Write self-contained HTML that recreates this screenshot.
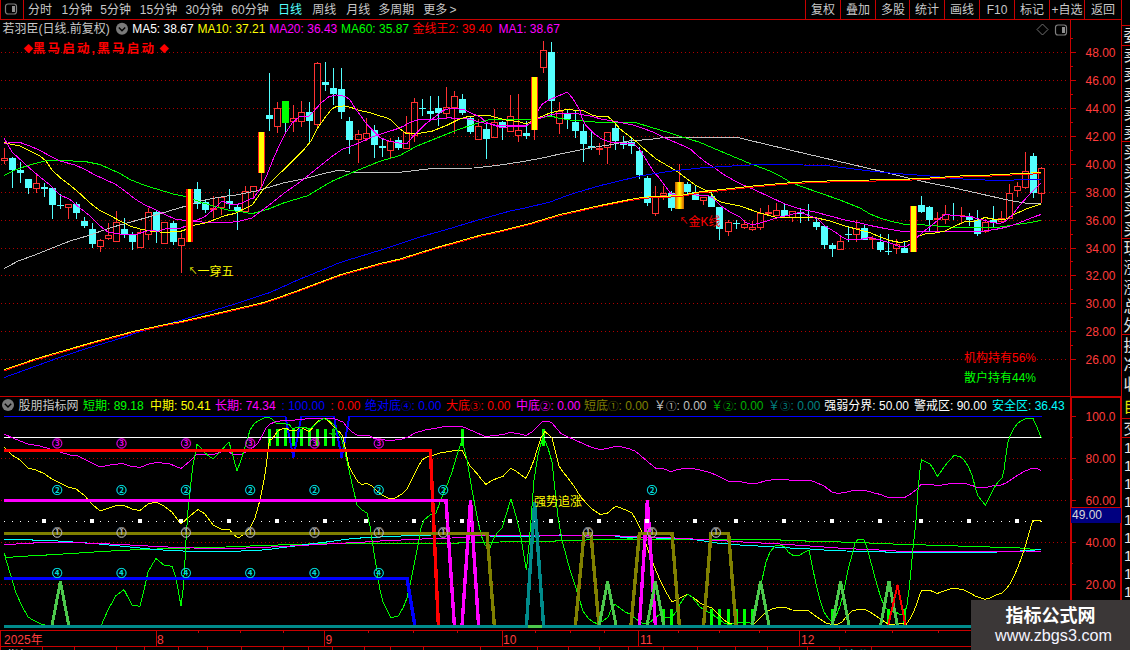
<!DOCTYPE html>
<html><head><meta charset="utf-8"><title>chart</title>
<style>html,body{margin:0;padding:0;background:#000;}body{width:1130px;height:650px;overflow:hidden;position:relative;}svg{position:absolute;left:0;top:0;display:block;font-family:'Liberation Sans','Noto Sans CJK SC',sans-serif;}.ce{shape-rendering:crispEdges}</style></head><body>
<svg width="1130" height="650" viewBox="0 0 1130 650">
<rect x="0" y="0" width="1130" height="650" fill="#000" />
<g class="ce">
<line x1="1" y1="52.5" x2="1067" y2="52.5" stroke="#b00000" stroke-width="1" stroke-dasharray="1 3"/>
<line x1="1" y1="80.5" x2="1067" y2="80.5" stroke="#b00000" stroke-width="1" stroke-dasharray="1 3"/>
<line x1="1" y1="108.5" x2="1067" y2="108.5" stroke="#b00000" stroke-width="1" stroke-dasharray="1 3"/>
<line x1="1" y1="136.5" x2="1067" y2="136.5" stroke="#b00000" stroke-width="1" stroke-dasharray="1 3"/>
<line x1="1" y1="164.5" x2="1067" y2="164.5" stroke="#b00000" stroke-width="1" stroke-dasharray="1 3"/>
<line x1="1" y1="192.5" x2="1067" y2="192.5" stroke="#b00000" stroke-width="1" stroke-dasharray="1 3"/>
<line x1="1" y1="220.5" x2="1067" y2="220.5" stroke="#b00000" stroke-width="1" stroke-dasharray="1 3"/>
<line x1="1" y1="248.5" x2="1067" y2="248.5" stroke="#b00000" stroke-width="1" stroke-dasharray="1 3"/>
<line x1="1" y1="275.5" x2="1067" y2="275.5" stroke="#b00000" stroke-width="1" stroke-dasharray="1 3"/>
<line x1="1" y1="303.5" x2="1067" y2="303.5" stroke="#b00000" stroke-width="1" stroke-dasharray="1 3"/>
<line x1="1" y1="331.5" x2="1067" y2="331.5" stroke="#b00000" stroke-width="1" stroke-dasharray="1 3"/>
<line x1="1" y1="359.5" x2="1067" y2="359.5" stroke="#b00000" stroke-width="1" stroke-dasharray="1 3"/>
<line x1="1" y1="458.5" x2="1067" y2="458.5" stroke="#b00000" stroke-width="1" stroke-dasharray="1 3"/>
<line x1="1" y1="500.5" x2="1067" y2="500.5" stroke="#b00000" stroke-width="1" stroke-dasharray="1 3"/>
<line x1="1" y1="542.5" x2="1067" y2="542.5" stroke="#b00000" stroke-width="1" stroke-dasharray="1 3"/>
<line x1="1" y1="584.5" x2="1067" y2="584.5" stroke="#b00000" stroke-width="1" stroke-dasharray="1 3"/>
</g>
<g class="ce">
<rect x="4" y="148" width="1" height="10" fill="#ff3232" />
<rect x="4" y="161" width="1" height="3" fill="#ff3232" />
<rect x="1.5" y="158.5" width="6" height="2" fill="none" stroke="#ff3232" stroke-width="1"/>
<rect x="12" y="157" width="1" height="31" fill="#54ffff" />
<rect x="9" y="158" width="7" height="12" fill="#54ffff" />
<rect x="20" y="162" width="1" height="21" fill="#54ffff" />
<rect x="17" y="170" width="7" height="3" fill="#54ffff" />
<rect x="28" y="179" width="1" height="15" fill="#54ffff" />
<rect x="25" y="179" width="7" height="9" fill="#54ffff" />
<rect x="36" y="175" width="1" height="8" fill="#ff3232" />
<rect x="36" y="189" width="1" height="4" fill="#ff3232" />
<rect x="33.5" y="183.5" width="6" height="5" fill="none" stroke="#ff3232" stroke-width="1"/>
<rect x="44" y="183" width="1" height="14" fill="#54ffff" />
<rect x="41" y="187" width="7" height="2" fill="#54ffff" />
<rect x="52" y="188" width="1" height="31" fill="#54ffff" />
<rect x="49" y="188" width="7" height="17" fill="#54ffff" />
<rect x="60" y="194" width="1" height="15" fill="#54ffff" />
<rect x="57" y="205" width="7" height="1" fill="#54ffff" />
<rect x="68" y="208" width="1" height="11" fill="#ff3232" />
<rect x="65.5" y="204.5" width="6" height="3" fill="none" stroke="#ff3232" stroke-width="1"/>
<rect x="76" y="202" width="1" height="17" fill="#54ffff" />
<rect x="73" y="204" width="7" height="9" fill="#54ffff" />
<rect x="84" y="217" width="1" height="11" fill="#54ffff" />
<rect x="81" y="221" width="7" height="5" fill="#54ffff" />
<rect x="92" y="223" width="1" height="25" fill="#54ffff" />
<rect x="89" y="229" width="7" height="15" fill="#54ffff" />
<rect x="100" y="239" width="1" height="1" fill="#ff3232" />
<rect x="100" y="247" width="1" height="5" fill="#ff3232" />
<rect x="97.5" y="240.5" width="6" height="6" fill="none" stroke="#ff3232" stroke-width="1"/>
<rect x="108" y="223" width="1" height="12" fill="#ff3232" />
<rect x="108" y="239" width="1" height="1" fill="#ff3232" />
<rect x="105.5" y="235.5" width="6" height="3" fill="none" stroke="#ff3232" stroke-width="1"/>
<rect x="116" y="211" width="1" height="11" fill="#ff3232" />
<rect x="113.5" y="222.5" width="6" height="19" fill="none" stroke="#ff3232" stroke-width="1"/>
<rect x="124" y="218" width="1" height="20" fill="#54ffff" />
<rect x="121" y="229" width="7" height="6" fill="#54ffff" />
<rect x="132" y="232" width="1" height="18" fill="#54ffff" />
<rect x="129" y="234" width="7" height="8" fill="#54ffff" />
<rect x="140" y="230" width="1" height="2" fill="#ff3232" />
<rect x="137.5" y="232.5" width="6" height="15" fill="none" stroke="#ff3232" stroke-width="1"/>
<rect x="148" y="208" width="1" height="4" fill="#ff3232" />
<rect x="148" y="235" width="1" height="5" fill="#ff3232" />
<rect x="145.5" y="212.5" width="6" height="22" fill="none" stroke="#ff3232" stroke-width="1"/>
<rect x="156" y="211" width="1" height="32" fill="#54ffff" />
<rect x="153" y="212" width="7" height="19" fill="#54ffff" />
<rect x="161.5" y="222.5" width="6" height="21" fill="none" stroke="#ff3232" stroke-width="1"/>
<rect x="173" y="221" width="1" height="24" fill="#54ffff" />
<rect x="170" y="223" width="7" height="19" fill="#54ffff" />
<rect x="181" y="233" width="1" height="5" fill="#ff3232" />
<rect x="181" y="246" width="1" height="27" fill="#ff3232" />
<rect x="178.5" y="238.5" width="6" height="7" fill="none" stroke="#ff3232" stroke-width="1"/>
<rect x="197" y="182" width="1" height="27" fill="#54ffff" />
<rect x="194" y="189" width="7" height="15" fill="#54ffff" />
<rect x="205" y="199" width="1" height="14" fill="#54ffff" />
<rect x="202" y="202" width="7" height="8" fill="#54ffff" />
<rect x="213" y="196" width="1" height="12" fill="#ff3232" />
<rect x="213" y="210" width="1" height="8" fill="#ff3232" />
<rect x="210" y="208" width="7" height="2" fill="#ff3232" />
<rect x="221" y="208" width="1" height="7" fill="#ff3232" />
<rect x="218.5" y="197.5" width="6" height="10" fill="none" stroke="#ff3232" stroke-width="1"/>
<rect x="229" y="189" width="1" height="20" fill="#54ffff" />
<rect x="226" y="201" width="7" height="3" fill="#54ffff" />
<rect x="237" y="204" width="1" height="26" fill="#54ffff" />
<rect x="234" y="207" width="7" height="4" fill="#54ffff" />
<rect x="245" y="186" width="1" height="5" fill="#ff3232" />
<rect x="242.5" y="191.5" width="6" height="20" fill="none" stroke="#ff3232" stroke-width="1"/>
<rect x="253" y="192" width="1" height="5" fill="#ff3232" />
<rect x="250.5" y="186.5" width="6" height="5" fill="none" stroke="#ff3232" stroke-width="1"/>
<rect x="269" y="73" width="1" height="58" fill="#54ffff" />
<rect x="266" y="115" width="7" height="4" fill="#54ffff" />
<rect x="277" y="102" width="1" height="6" fill="#ff3232" />
<rect x="277" y="127" width="1" height="6" fill="#ff3232" />
<rect x="274.5" y="108.5" width="6" height="18" fill="none" stroke="#ff3232" stroke-width="1"/>
<rect x="285" y="101" width="1" height="32" fill="#54ffff" />
<rect x="282" y="101" width="7" height="22" fill="#00ff00" />
<rect x="293" y="105" width="1" height="13" fill="#ff3232" />
<rect x="293" y="122" width="1" height="10" fill="#ff3232" />
<rect x="290.5" y="118.5" width="6" height="3" fill="none" stroke="#ff3232" stroke-width="1"/>
<rect x="301" y="101" width="1" height="11" fill="#ff3232" />
<rect x="301" y="122" width="1" height="5" fill="#ff3232" />
<rect x="298.5" y="112.5" width="6" height="9" fill="none" stroke="#ff3232" stroke-width="1"/>
<rect x="309" y="102" width="1" height="40" fill="#54ffff" />
<rect x="306" y="112" width="7" height="9" fill="#54ffff" />
<rect x="317" y="62" width="1" height="1" fill="#ff3232" />
<rect x="317" y="125" width="1" height="2" fill="#ff3232" />
<rect x="314.5" y="63.5" width="6" height="61" fill="none" stroke="#ff3232" stroke-width="1"/>
<rect x="325" y="62" width="1" height="29" fill="#54ffff" />
<rect x="322" y="82" width="7" height="3" fill="#54ffff" />
<rect x="333" y="68" width="1" height="37" fill="#54ffff" />
<rect x="330" y="88" width="7" height="6" fill="#54ffff" />
<rect x="341" y="68" width="1" height="51" fill="#54ffff" />
<rect x="338" y="89" width="7" height="23" fill="#54ffff" />
<rect x="349" y="117" width="1" height="37" fill="#54ffff" />
<rect x="346" y="121" width="7" height="19" fill="#54ffff" />
<rect x="358" y="130" width="1" height="4" fill="#ff3232" />
<rect x="358" y="140" width="1" height="23" fill="#ff3232" />
<rect x="355.5" y="134.5" width="6" height="5" fill="none" stroke="#ff3232" stroke-width="1"/>
<rect x="366" y="118" width="1" height="15" fill="#ff3232" />
<rect x="366" y="139" width="1" height="2" fill="#ff3232" />
<rect x="363.5" y="133.5" width="6" height="5" fill="none" stroke="#ff3232" stroke-width="1"/>
<rect x="374" y="125" width="1" height="33" fill="#54ffff" />
<rect x="371" y="130" width="7" height="15" fill="#54ffff" />
<rect x="382" y="138" width="1" height="19" fill="#54ffff" />
<rect x="379" y="146" width="7" height="2" fill="#54ffff" />
<rect x="390" y="138" width="1" height="3" fill="#ff3232" />
<rect x="390" y="151" width="1" height="8" fill="#ff3232" />
<rect x="387.5" y="141.5" width="6" height="9" fill="none" stroke="#ff3232" stroke-width="1"/>
<rect x="398" y="137" width="1" height="13" fill="#54ffff" />
<rect x="395" y="140" width="7" height="8" fill="#54ffff" />
<rect x="406" y="116" width="1" height="16" fill="#ff3232" />
<rect x="403.5" y="132.5" width="6" height="16" fill="none" stroke="#ff3232" stroke-width="1"/>
<rect x="414" y="98" width="1" height="4" fill="#ff3232" />
<rect x="414" y="136" width="1" height="6" fill="#ff3232" />
<rect x="411.5" y="102.5" width="6" height="33" fill="none" stroke="#ff3232" stroke-width="1"/>
<rect x="422" y="99" width="1" height="17" fill="#54ffff" />
<rect x="419" y="108" width="7" height="1" fill="#54ffff" />
<rect x="430" y="96" width="1" height="23" fill="#54ffff" />
<rect x="427" y="111" width="7" height="3" fill="#54ffff" />
<rect x="438" y="96" width="1" height="30" fill="#54ffff" />
<rect x="435" y="108" width="7" height="5" fill="#54ffff" />
<rect x="446" y="87" width="1" height="20" fill="#ff3232" />
<rect x="446" y="114" width="1" height="4" fill="#ff3232" />
<rect x="443.5" y="107.5" width="6" height="6" fill="none" stroke="#ff3232" stroke-width="1"/>
<rect x="454" y="91" width="1" height="5" fill="#ff3232" />
<rect x="454" y="108" width="1" height="26" fill="#ff3232" />
<rect x="451.5" y="96.5" width="6" height="11" fill="none" stroke="#ff3232" stroke-width="1"/>
<rect x="462" y="94" width="1" height="21" fill="#54ffff" />
<rect x="459" y="99" width="7" height="14" fill="#54ffff" />
<rect x="470" y="116" width="1" height="18" fill="#54ffff" />
<rect x="467" y="118" width="7" height="14" fill="#54ffff" />
<rect x="478" y="119" width="1" height="7" fill="#ff3232" />
<rect x="475.5" y="126.5" width="6" height="13" fill="none" stroke="#ff3232" stroke-width="1"/>
<rect x="486" y="122" width="1" height="37" fill="#54ffff" />
<rect x="483" y="129" width="7" height="10" fill="#54ffff" />
<rect x="494" y="109" width="1" height="13" fill="#ff3232" />
<rect x="491.5" y="122.5" width="6" height="15" fill="none" stroke="#ff3232" stroke-width="1"/>
<rect x="502" y="121" width="1" height="19" fill="#54ffff" />
<rect x="499" y="122" width="7" height="5" fill="#54ffff" />
<rect x="510" y="95" width="1" height="21" fill="#ff3232" />
<rect x="507.5" y="116.5" width="6" height="15" fill="none" stroke="#ff3232" stroke-width="1"/>
<rect x="518" y="94" width="1" height="36" fill="#ff3232" />
<rect x="518" y="136" width="1" height="6" fill="#ff3232" />
<rect x="515.5" y="130.5" width="6" height="5" fill="none" stroke="#ff3232" stroke-width="1"/>
<rect x="526" y="121" width="1" height="18" fill="#54ffff" />
<rect x="523" y="133" width="7" height="3" fill="#54ffff" />
<rect x="543" y="41" width="1" height="9" fill="#ff3232" />
<rect x="543" y="68" width="1" height="5" fill="#ff3232" />
<rect x="540.5" y="50.5" width="6" height="17" fill="none" stroke="#ff3232" stroke-width="1"/>
<rect x="551" y="42" width="1" height="75" fill="#54ffff" />
<rect x="548" y="52" width="7" height="49" fill="#54ffff" />
<rect x="559" y="102" width="1" height="9" fill="#ff3232" />
<rect x="559" y="124" width="1" height="10" fill="#ff3232" />
<rect x="556.5" y="111.5" width="6" height="12" fill="none" stroke="#ff3232" stroke-width="1"/>
<rect x="567" y="110" width="1" height="19" fill="#54ffff" />
<rect x="564" y="113" width="7" height="6" fill="#54ffff" />
<rect x="575" y="111" width="1" height="27" fill="#54ffff" />
<rect x="572" y="122" width="7" height="9" fill="#54ffff" />
<rect x="583" y="124" width="1" height="38" fill="#54ffff" />
<rect x="580" y="131" width="7" height="13" fill="#54ffff" />
<rect x="591" y="132" width="1" height="18" fill="#54ffff" />
<rect x="588" y="146" width="7" height="2" fill="#54ffff" />
<rect x="599" y="143" width="1" height="5" fill="#ff3232" />
<rect x="599" y="150" width="1" height="5" fill="#ff3232" />
<rect x="596" y="148" width="7" height="2" fill="#ff3232" />
<rect x="607" y="148" width="1" height="16" fill="#ff3232" />
<rect x="604.5" y="132.5" width="6" height="15" fill="none" stroke="#ff3232" stroke-width="1"/>
<rect x="615" y="125" width="1" height="25" fill="#54ffff" />
<rect x="612" y="128" width="7" height="13" fill="#54ffff" />
<rect x="623" y="136" width="1" height="13" fill="#54ffff" />
<rect x="620" y="142" width="7" height="3" fill="#54ffff" />
<rect x="631" y="138" width="1" height="16" fill="#54ffff" />
<rect x="628" y="142" width="7" height="4" fill="#54ffff" />
<rect x="639" y="147" width="1" height="32" fill="#54ffff" />
<rect x="636" y="151" width="7" height="24" fill="#54ffff" />
<rect x="647" y="176" width="1" height="30" fill="#54ffff" />
<rect x="644" y="178" width="7" height="25" fill="#54ffff" />
<rect x="655" y="186" width="1" height="10" fill="#ff3232" />
<rect x="655" y="214" width="1" height="2" fill="#ff3232" />
<rect x="652.5" y="196.5" width="6" height="17" fill="none" stroke="#ff3232" stroke-width="1"/>
<rect x="663" y="186" width="1" height="7" fill="#ff3232" />
<rect x="663" y="196" width="1" height="4" fill="#ff3232" />
<rect x="660.5" y="193.5" width="6" height="2" fill="none" stroke="#ff3232" stroke-width="1"/>
<rect x="671" y="191" width="1" height="20" fill="#54ffff" />
<rect x="668" y="193" width="7" height="15" fill="#54ffff" />
<rect x="679" y="164" width="1" height="18" fill="#ff3232" />
<rect x="675" y="182" width="1" height="27" fill="#d07000" />
<rect x="676" y="182" width="1" height="27" fill="#e89000" />
<rect x="677" y="182" width="1" height="27" fill="#f8b800" />
<rect x="678" y="182" width="1" height="27" fill="#ffe000" />
<rect x="679" y="182" width="1" height="27" fill="#ffff00" />
<rect x="680" y="182" width="1" height="27" fill="#ffe000" />
<rect x="681" y="182" width="1" height="27" fill="#f8b800" />
<rect x="682" y="182" width="1" height="27" fill="#e89000" />
<rect x="683" y="182" width="1" height="27" fill="#d07000" />
<rect x="687" y="182" width="1" height="14" fill="#54ffff" />
<rect x="684" y="184" width="7" height="8" fill="#54ffff" />
<rect x="695" y="185" width="1" height="15" fill="#54ffff" />
<rect x="692" y="192" width="7" height="8" fill="#54ffff" />
<rect x="703" y="201" width="1" height="4" fill="#ff3232" />
<rect x="700.5" y="197.5" width="6" height="3" fill="none" stroke="#ff3232" stroke-width="1"/>
<rect x="711" y="191" width="1" height="16" fill="#54ffff" />
<rect x="708" y="196" width="7" height="11" fill="#54ffff" />
<rect x="719" y="207" width="1" height="33" fill="#54ffff" />
<rect x="716" y="207" width="7" height="22" fill="#54ffff" />
<rect x="728" y="220" width="1" height="2" fill="#ff3232" />
<rect x="728" y="232" width="1" height="4" fill="#ff3232" />
<rect x="725.5" y="222.5" width="6" height="9" fill="none" stroke="#ff3232" stroke-width="1"/>
<rect x="736" y="220" width="1" height="9" fill="#54ffff" />
<rect x="733" y="223" width="7" height="1" fill="#54ffff" />
<rect x="744" y="220" width="1" height="4" fill="#ff3232" />
<rect x="744" y="228" width="1" height="1" fill="#ff3232" />
<rect x="741.5" y="224.5" width="6" height="3" fill="none" stroke="#ff3232" stroke-width="1"/>
<rect x="752" y="221" width="1" height="6" fill="#ff3232" />
<rect x="752" y="230" width="1" height="1" fill="#ff3232" />
<rect x="749.5" y="227.5" width="6" height="2" fill="none" stroke="#ff3232" stroke-width="1"/>
<rect x="760" y="208" width="1" height="5" fill="#ff3232" />
<rect x="760" y="228" width="1" height="2" fill="#ff3232" />
<rect x="757.5" y="213.5" width="6" height="14" fill="none" stroke="#ff3232" stroke-width="1"/>
<rect x="768" y="205" width="1" height="7" fill="#ff3232" />
<rect x="768" y="214" width="1" height="1" fill="#ff3232" />
<rect x="765" y="212" width="7" height="2" fill="#ff3232" />
<rect x="776" y="203" width="1" height="7" fill="#ff3232" />
<rect x="773.5" y="210.5" width="6" height="5" fill="none" stroke="#ff3232" stroke-width="1"/>
<rect x="784" y="204" width="1" height="12" fill="#54ffff" />
<rect x="781" y="210" width="7" height="6" fill="#54ffff" />
<rect x="792" y="218" width="1" height="4" fill="#ff3232" />
<rect x="789.5" y="211.5" width="6" height="6" fill="none" stroke="#ff3232" stroke-width="1"/>
<rect x="800" y="208" width="1" height="15" fill="#54ffff" />
<rect x="797" y="212" width="7" height="2" fill="#54ffff" />
<rect x="808" y="204" width="1" height="17" fill="#54ffff" />
<rect x="816" y="218" width="1" height="12" fill="#54ffff" />
<rect x="813" y="222" width="7" height="5" fill="#54ffff" />
<rect x="824" y="226" width="1" height="23" fill="#54ffff" />
<rect x="821" y="226" width="7" height="19" fill="#54ffff" />
<rect x="832" y="243" width="1" height="14" fill="#54ffff" />
<rect x="829" y="245" width="7" height="4" fill="#54ffff" />
<rect x="840" y="236" width="1" height="5" fill="#ff3232" />
<rect x="837.5" y="241.5" width="6" height="8" fill="none" stroke="#ff3232" stroke-width="1"/>
<rect x="848" y="227" width="1" height="15" fill="#54ffff" />
<rect x="845" y="234" width="7" height="1" fill="#54ffff" />
<rect x="856" y="220" width="1" height="8" fill="#ff3232" />
<rect x="856" y="235" width="1" height="7" fill="#ff3232" />
<rect x="853.5" y="228.5" width="6" height="6" fill="none" stroke="#ff3232" stroke-width="1"/>
<rect x="864" y="224" width="1" height="16" fill="#54ffff" />
<rect x="861" y="228" width="7" height="12" fill="#54ffff" />
<rect x="872" y="236" width="1" height="2" fill="#ff3232" />
<rect x="872" y="240" width="1" height="9" fill="#ff3232" />
<rect x="869" y="238" width="7" height="2" fill="#ff3232" />
<rect x="880" y="234" width="1" height="18" fill="#54ffff" />
<rect x="877" y="242" width="7" height="8" fill="#54ffff" />
<rect x="888" y="234" width="1" height="21" fill="#54ffff" />
<rect x="885" y="251" width="7" height="1" fill="#54ffff" />
<rect x="896" y="239" width="1" height="5" fill="#ff3232" />
<rect x="896" y="249" width="1" height="5" fill="#ff3232" />
<rect x="893.5" y="244.5" width="6" height="4" fill="none" stroke="#ff3232" stroke-width="1"/>
<rect x="904" y="241" width="1" height="12" fill="#54ffff" />
<rect x="901" y="248" width="7" height="5" fill="#54ffff" />
<rect x="921" y="196" width="1" height="17" fill="#54ffff" />
<rect x="918" y="205" width="7" height="7" fill="#54ffff" />
<rect x="929" y="206" width="1" height="26" fill="#54ffff" />
<rect x="926" y="207" width="7" height="13" fill="#54ffff" />
<rect x="937" y="212" width="1" height="6" fill="#ff3232" />
<rect x="937" y="220" width="1" height="12" fill="#ff3232" />
<rect x="934" y="218" width="7" height="2" fill="#ff3232" />
<rect x="945" y="205" width="1" height="9" fill="#ff3232" />
<rect x="945" y="220" width="1" height="4" fill="#ff3232" />
<rect x="942.5" y="214.5" width="6" height="5" fill="none" stroke="#ff3232" stroke-width="1"/>
<rect x="953" y="203" width="1" height="17" fill="#54ffff" />
<rect x="950" y="215" width="7" height="1" fill="#54ffff" />
<rect x="961" y="207" width="1" height="8" fill="#ff3232" />
<rect x="961" y="216" width="1" height="8" fill="#ff3232" />
<rect x="958" y="215" width="7" height="1" fill="#ff3232" />
<rect x="969" y="213" width="1" height="13" fill="#54ffff" />
<rect x="966" y="216" width="7" height="4" fill="#54ffff" />
<rect x="977" y="210" width="1" height="26" fill="#54ffff" />
<rect x="974" y="220" width="7" height="14" fill="#54ffff" />
<rect x="985" y="219" width="1" height="3" fill="#ff3232" />
<rect x="985" y="232" width="1" height="1" fill="#ff3232" />
<rect x="982.5" y="222.5" width="6" height="9" fill="none" stroke="#ff3232" stroke-width="1"/>
<rect x="993" y="206" width="1" height="22" fill="#54ffff" />
<rect x="990" y="220" width="7" height="3" fill="#54ffff" />
<rect x="1001" y="211" width="1" height="7" fill="#ff3232" />
<rect x="998.5" y="218.5" width="6" height="3" fill="none" stroke="#ff3232" stroke-width="1"/>
<rect x="1009" y="184" width="1" height="9" fill="#ff3232" />
<rect x="1006.5" y="193.5" width="6" height="25" fill="none" stroke="#ff3232" stroke-width="1"/>
<rect x="1017" y="182" width="1" height="4" fill="#ff3232" />
<rect x="1017" y="191" width="1" height="6" fill="#ff3232" />
<rect x="1014.5" y="186.5" width="6" height="4" fill="none" stroke="#ff3232" stroke-width="1"/>
<rect x="1025" y="152" width="1" height="19" fill="#ff3232" />
<rect x="1025" y="188" width="1" height="1" fill="#ff3232" />
<rect x="1022.5" y="171.5" width="6" height="16" fill="none" stroke="#ff3232" stroke-width="1"/>
<rect x="1033" y="153" width="1" height="45" fill="#54ffff" />
<rect x="1030" y="156" width="7" height="37" fill="#54ffff" />
<rect x="1041" y="167" width="1" height="1" fill="#ff3232" />
<rect x="1041" y="194" width="1" height="9" fill="#ff3232" />
<rect x="1038.5" y="168.5" width="6" height="25" fill="none" stroke="#ff3232" stroke-width="1"/>
</g>
<g class="ce" stroke-linejoin="round">
<polyline points="4.0,268.5 19.0,260.6 32.0,256.1 48.0,249.7 70.0,241.0 89.0,235.4 111.5,227.4 137.0,220.3 159.3,213.9 175.0,209.2 186.0,206.0 200.0,201.0 215.0,198.0 230.0,195.5 236.0,195.0 256.8,190.8 284.0,182.8 305.0,178.6 325.0,173.2 340.0,170.0 350.0,172.0 370.0,172.4 400.0,172.3 432.0,168.5 473.6,168.0 496.0,165.6 520.0,162.0 540.0,158.5 560.0,154.0 580.0,150.0 590.0,148.0 610.0,144.8 630.0,140.8 650.0,139.5 665.0,137.3 738.0,137.6 790.0,150.0 855.0,165.2 870.0,168.7 890.0,173.5 910.0,178.5 930.0,183.0 950.0,187.0 970.0,191.5 990.0,196.0 1010.0,200.5 1025.0,203.0 1041.0,204.0" fill="none" stroke="#c0c0c0" stroke-width="1" />
<polyline points="4.0,175.5 15.0,170.0 25.0,166.5 35.0,163.5 47.0,160.5 60.0,160.5 85.0,161.5 100.0,164.5 110.0,169.0 120.0,173.5 130.0,179.5 145.0,185.5 160.0,190.0 175.0,194.5 186.0,196.5 193.0,199.0 200.0,202.0 210.0,205.0 220.0,208.0 230.0,210.5 240.8,211.6 252.0,213.7 268.0,209.2 284.0,202.8 308.0,195.6 332.0,181.2 354.4,171.6 380.0,161.2 400.0,155.5 416.0,146.4 432.0,140.0 448.0,133.6 464.0,127.5 480.0,122.4 489.6,119.5 512.0,119.5 528.0,120.0 540.8,117.9 550.4,116.0 560.0,118.4 570.0,120.0 600.0,122.4 635.0,122.4 650.0,127.0 665.0,131.5 680.0,136.3 700.0,142.4 720.0,151.0 750.0,163.5 770.0,171.0 780.0,176.0 790.0,182.0 800.0,186.0 820.0,193.0 840.0,200.0 860.0,208.0 870.0,214.0 880.0,218.0 890.0,221.0 905.0,224.5 915.0,224.0 930.0,225.5 950.0,227.0 1000.0,227.0 1010.0,225.5 1020.0,224.0 1030.0,222.5 1041.0,220.5" fill="none" stroke="#00ff00" stroke-width="1" />
<polyline points="4.0,144.0 10.0,142.5 20.0,142.5 30.0,146.0 40.0,150.5 50.0,156.0 60.0,161.0 75.0,165.0 85.0,169.5 95.0,175.0 105.0,179.5 115.0,184.0 125.0,191.0 135.0,199.0 145.0,205.0 155.0,209.5 165.0,214.5 175.0,219.0 185.0,220.5 195.0,221.0 205.0,222.5 215.0,223.0 230.0,222.5 240.0,221.0 252.0,218.0 268.0,206.0 284.0,193.2 300.0,182.0 316.0,169.2 332.0,156.4 341.6,149.7 357.6,143.6 373.6,136.4 396.0,129.2 404.0,126.0 409.6,122.4 419.2,119.5 432.0,119.5 448.0,117.9 464.0,118.4 472.0,119.5 480.0,122.4 489.6,124.0 499.2,125.9 512.0,125.9 526.4,125.6 532.8,121.6 540.8,117.9 552.0,114.4 562.0,113.0 576.0,113.5 590.0,116.0 602.0,119.2 618.0,122.0 634.0,125.3 653.2,132.0 666.0,138.4 680.4,144.5 690.0,148.8 698.0,156.0 706.0,162.4 714.0,167.5 723.6,174.4 733.2,180.0 742.8,184.8 755.0,190.0 770.0,197.0 785.0,204.0 800.0,209.0 815.0,212.0 830.0,216.0 845.0,220.0 860.0,223.0 870.0,225.5 885.0,228.5 900.0,231.0 925.0,231.0 940.0,231.5 980.0,231.5 995.0,229.5 1005.0,227.5 1015.0,224.5 1025.0,220.5 1035.0,216.5 1041.0,214.5" fill="none" stroke="#ff00ff" stroke-width="1" />
<polyline points="4.0,142.5 10.0,144.0 20.0,146.0 30.0,151.0 40.0,156.0 46.0,161.0 52.0,170.0 60.0,177.5 70.0,185.0 80.0,193.7 90.0,203.0 100.0,210.5 110.0,215.5 120.0,221.0 130.0,226.0 140.0,229.0 150.0,231.0 160.0,232.0 170.0,232.0 180.0,231.5 186.0,229.5 195.0,225.0 205.0,223.0 215.0,219.5 225.0,215.5 235.0,213.5 241.6,210.0 252.0,205.2 261.6,191.6 276.0,177.2 293.6,160.0 303.2,150.4 311.2,140.8 317.6,128.0 325.6,116.8 332.0,108.8 336.8,106.4 344.8,105.9 351.2,107.5 359.2,110.4 368.8,112.3 378.4,115.5 386.4,117.6 391.2,120.0 396.0,124.8 400.8,129.6 405.6,133.1 416.0,133.9 432.0,131.2 448.0,124.8 459.2,119.2 467.2,116.8 480.0,115.2 488.0,115.2 496.0,117.6 505.6,120.0 518.4,121.6 526.4,124.0 532.8,120.8 540.8,116.8 550.4,112.8 560.0,110.4 568.0,109.6 584.0,111.0 592.0,115.0 600.0,117.0 608.0,116.5 614.0,122.0 620.0,129.0 628.0,135.0 637.2,142.4 646.8,151.2 656.4,159.2 666.0,164.8 675.6,170.4 685.2,177.6 694.8,184.8 704.4,189.6 710.8,192.8 715.6,199.2 722.0,202.4 730.0,204.0 740.0,206.0 760.0,213.0 775.0,217.0 790.0,218.0 815.0,217.5 830.0,221.0 845.0,226.0 860.0,230.0 870.0,232.5 880.0,237.0 890.0,240.5 900.0,242.5 908.0,241.0 915.0,237.5 925.0,234.0 935.0,233.0 945.0,231.0 955.0,226.0 965.0,221.5 975.0,221.0 985.0,217.5 995.0,219.5 1005.0,219.5 1015.0,214.0 1025.0,209.5 1035.0,206.0 1041.0,204.0" fill="none" stroke="#ffff00" stroke-width="1" />
<polyline points="4.0,138.0 8.0,145.0 12.0,152.0 18.0,157.5 24.0,163.0 30.0,168.5 40.0,177.0 50.0,185.0 60.0,195.0 70.0,199.5 80.0,208.0 90.0,216.0 100.0,226.0 108.0,232.0 120.0,234.0 135.0,235.0 145.0,231.5 152.0,230.0 158.0,231.5 165.0,229.0 180.0,228.5 186.0,226.0 195.0,221.0 205.0,216.5 215.0,208.0 222.0,201.0 228.0,203.5 235.0,205.0 242.0,203.0 250.0,199.0 253.6,198.0 261.6,186.8 268.0,172.4 272.8,160.0 279.2,145.6 285.6,132.8 292.0,123.2 300.0,116.0 308.8,116.5 314.4,110.4 320.8,103.2 328.8,96.8 336.8,94.9 344.8,96.3 349.6,99.2 354.4,107.2 360.8,116.0 367.2,124.8 373.6,131.2 380.0,137.6 388.0,140.8 396.0,142.4 402.4,143.7 407.2,143.2 412.0,137.6 416.0,133.6 425.6,124.0 435.2,116.8 443.2,110.4 451.2,108.0 464.0,109.6 472.0,113.6 480.0,116.8 486.4,122.4 494.4,125.6 502.4,128.0 510.4,126.4 518.4,126.9 526.4,125.9 531.2,122.4 537.6,111.2 542.4,104.0 548.8,100.0 560.0,95.2 567.2,92.0 572.8,98.4 580.0,110.4 581.2,116.0 586.0,125.6 594.0,133.6 602.0,139.2 611.6,142.4 622.8,143.2 634.0,144.0 640.4,150.4 646.8,160.8 653.2,171.2 659.6,178.4 666.0,187.2 670.8,193.6 678.8,196.0 688.4,194.4 698.0,195.2 707.6,195.2 712.4,197.6 720.4,205.6 730.0,212.0 739.6,216.8 745.0,222.0 752.0,225.0 760.0,223.0 770.0,220.0 780.0,217.0 790.0,215.0 800.0,212.0 810.0,216.0 818.0,219.0 825.0,226.0 835.0,232.0 842.0,237.0 848.0,240.0 860.0,239.5 870.0,237.5 880.0,240.0 890.0,243.0 898.0,246.0 905.0,247.0 912.0,243.0 917.0,237.5 925.0,230.5 935.0,222.5 945.0,214.5 950.0,215.0 960.0,216.0 970.0,216.0 975.0,218.0 985.0,220.5 992.0,222.5 1000.0,223.5 1005.0,221.5 1012.0,215.5 1020.0,205.0 1028.0,196.0 1035.0,189.0 1041.0,183.0" fill="none" stroke="#ff00ff" stroke-width="1" />
<polyline points="4.0,377.6 30.0,368.2 54.5,359.3 80.0,350.5 100.0,344.5 120.0,338.5 140.0,331.8 160.0,326.0 180.0,320.5 210.0,311.5 237.0,303.4 270.0,292.5 300.0,279.0 309.6,275.3 340.0,262.5 386.8,248.2 420.0,237.0 450.0,228.5 476.8,220.4 510.0,211.0 525.0,208.0 550.0,202.0 570.0,194.5 600.0,185.6 640.0,176.0 670.0,171.2 700.0,168.0 725.0,166.4 750.0,165.0 790.0,164.5 830.0,166.0 870.0,171.0 890.0,173.0 910.0,174.5 930.0,176.0 950.0,178.0 970.0,179.5 990.0,180.2 1041.0,179.8" fill="none" stroke="#0000ff" stroke-width="1" />
<polyline points="4.0,370.9 36.0,359.9 60.0,352.9 80.0,347.1 100.0,341.4 120.0,336.1 135.0,332.1 150.0,328.9 165.0,325.6 180.0,322.9 210.0,316.1 240.0,309.1 262.0,304.0 280.0,298.1 300.0,290.9 340.0,275.9 380.0,264.6 400.0,260.1 436.0,248.8 480.0,236.4 500.0,232.1 530.0,224.6 560.0,215.6 570.0,213.4 600.0,206.6 630.0,200.6 645.0,198.2 680.0,196.6 700.0,192.9 720.0,190.8 750.0,187.4 780.0,184.6 800.0,183.2 840.0,181.6 870.0,181.1 900.0,180.6 930.0,179.1 960.0,177.1 990.0,176.1 1010.0,175.1 1041.0,173.6" fill="none" stroke="#ff0000" stroke-width="1" />
<polyline points="4.0,369.8 36.0,358.8 60.0,351.8 80.0,346.0 100.0,340.3 120.0,335.0 135.0,331.0 150.0,327.8 165.0,324.5 180.0,321.8 210.0,315.0 240.0,308.0 262.0,302.9 280.0,297.0 300.0,289.8 340.0,274.8 380.0,263.5 400.0,259.0 436.0,247.7 480.0,235.3 500.0,231.0 530.0,223.5 560.0,214.5 570.0,212.3 600.0,205.5 630.0,199.5 645.0,197.1 680.0,195.5 700.0,191.8 720.0,189.7 750.0,186.3 780.0,183.5 800.0,182.1 840.0,180.5 870.0,180.0 900.0,179.5 930.0,178.0 960.0,176.0 990.0,175.0 1010.0,174.0 1041.0,172.5" fill="none" stroke="#ffff00" stroke-width="1" />
</g>
<g class="ce">
<rect x="186" y="189" width="7" height="53" fill="#ff0000" />
<rect x="188" y="189" width="3" height="53" fill="#ffff00" />
<rect x="261" y="173" width="1" height="15" fill="#ff3232" />
<rect x="258" y="132" width="7" height="41" fill="#ff2020" />
<rect x="259" y="132" width="5" height="41" fill="#ffff00" />
<rect x="534" y="130" width="1" height="10" fill="#ff3232" />
<rect x="531" y="77" width="7" height="53" fill="#ff2020" />
<rect x="532" y="77" width="5" height="53" fill="#ffff00" />
<rect x="910" y="206" width="7" height="46" fill="#ff2020" />
<rect x="911" y="206" width="5" height="46" fill="#ffff00" />
</g>
<g class="ce" stroke-linejoin="miter">
<rect x="268" y="429" width="3" height="17" fill="#00ff00" />
<rect x="276" y="429" width="3" height="17" fill="#00ff00" />
<rect x="284" y="429" width="3" height="17" fill="#00ff00" />
<rect x="292" y="429" width="3" height="17" fill="#00ff00" />
<rect x="300" y="429" width="3" height="17" fill="#00ff00" />
<rect x="308" y="429" width="3" height="17" fill="#00ff00" />
<rect x="316" y="429" width="3" height="17" fill="#00ff00" />
<rect x="324" y="429" width="3" height="17" fill="#00ff00" />
<rect x="332" y="429" width="3" height="17" fill="#00ff00" />
<rect x="461" y="429" width="3" height="17" fill="#00ff00" />
<rect x="542" y="429" width="3" height="17" fill="#00ff00" />
<rect x="662" y="609" width="3" height="16" fill="#00ff00" />
<rect x="670" y="609" width="3" height="16" fill="#00ff00" />
<rect x="710" y="609" width="3" height="16" fill="#00ff00" />
<rect x="718" y="609" width="3" height="16" fill="#00ff00" />
<rect x="727" y="609" width="3" height="16" fill="#00ff00" />
<rect x="735" y="609" width="3" height="16" fill="#00ff00" />
<rect x="743" y="609" width="3" height="16" fill="#00ff00" />
<rect x="751" y="609" width="3" height="16" fill="#00ff00" />
<rect x="831" y="609" width="3" height="16" fill="#00ff00" />
<rect x="887" y="609" width="3" height="16" fill="#00ff00" />
<rect x="903" y="609" width="3" height="16" fill="#00ff00" />
<polygon points="333.5,427.5 335.0,432.5 338.5,433.5 335.0,435 333.5,439 332.0,435 328.5,433.5 332.0,432.5" fill="#00c800"/>
<polyline points="4.0,416.5 285.4,416.5" fill="none" stroke="#0000ff" stroke-width="1" />
<polyline points="301.4,416.5 334.0,416.5" fill="none" stroke="#0000ff" stroke-width="1" />
<polyline points="349.4,416.5 1041.5,416.5" fill="none" stroke="#0000ff" stroke-width="1" />
<polyline points="285.4,416.5 293.4,458.0 301.4,416.5" fill="none" stroke="#0000ff" stroke-width="2" />
<polyline points="334.0,416.5 341.6,458.0 349.4,416.5" fill="none" stroke="#0000ff" stroke-width="2" />
<rect x="4" y="437" width="1037.5" height="1" fill="#ffffff" />
<polyline points="4.0,553.0 6.0,557.6 20.0,556.4 40.0,555.4 70.0,553.6 100.0,551.6 130.0,550.0 150.0,549.2 180.0,548.4 200.0,547.6 226.0,547.0 260.0,545.6 290.0,544.6 320.0,543.6 340.0,543.4 458.0,543.4 459.0,542.6 500.0,542.0 555.0,541.4 556.0,540.0 586.0,540.0 626.0,539.4 627.0,539.0 780.0,539.4 781.0,540.4 805.0,540.4 806.0,541.4 836.0,541.6 846.0,542.4 868.0,542.4 870.0,543.4 892.0,543.4 894.0,544.4 925.0,544.4 927.0,545.4 957.0,545.4 959.0,546.4 989.0,546.4 991.0,547.4 1020.0,548.0 1030.0,549.0 1041.0,549.4" fill="none" stroke="#00ff00" stroke-width="1" />
<polyline points="4.0,539.4 32.0,539.4 33.0,540.4 48.0,540.4 65.0,541.4 80.0,542.6 96.0,543.6 104.0,544.6 120.0,546.0 130.0,547.0 150.0,549.0 170.0,550.6 195.0,551.4 226.0,551.4 256.0,550.6 272.0,549.0 290.0,546.6 313.0,543.6 330.0,541.6 345.0,539.4 365.0,537.6 395.0,536.4 410.0,535.4 452.0,534.6 475.0,535.0 490.0,536.0 540.0,536.0 548.0,535.0 580.0,535.0 588.0,535.4 612.0,535.4 620.0,537.0 690.0,539.0 700.0,540.4 710.0,542.0 720.0,543.4 740.0,545.0 765.0,546.4 790.0,548.0 810.0,549.0 830.0,550.4 846.0,551.0 885.0,551.4 886.0,552.4 995.0,552.4 1000.0,551.6 1020.0,551.0 1022.0,550.0 1035.0,550.0 1037.0,549.0 1041.0,549.0" fill="none" stroke="#00ffff" stroke-width="1" />
<polyline points="4.0,544.6 24.0,543.6 40.0,542.6 56.0,542.2 80.0,542.8 100.0,543.6 120.0,544.4 140.0,545.6 160.0,546.6 180.0,547.6 200.0,548.2 226.0,548.6 260.0,547.6 290.0,546.0 320.0,544.4 346.0,543.0 362.0,542.2 380.0,541.0 410.0,539.6 430.0,538.6 452.0,538.0 465.0,537.4 470.0,536.0 560.0,535.0 620.0,536.0 640.0,537.0 675.0,538.0 700.0,539.4 720.0,540.6 750.0,542.4 780.0,544.0 810.0,546.0 830.0,547.4 846.0,548.6 870.0,549.6 892.0,550.6 900.0,551.4 995.0,551.4 1000.0,551.0 1025.0,551.0 1041.0,551.4" fill="none" stroke="#ff00ff" stroke-width="1" />
<polyline points="4.0,434.0 15.0,439.0 28.0,444.0 40.0,446.0 50.0,449.0 60.0,452.0 70.0,455.0 78.0,456.0 90.0,462.0 100.0,467.0 110.0,465.0 122.0,463.5 130.0,466.0 140.0,467.5 150.0,463.5 158.0,462.5 170.0,464.0 181.0,468.5 190.0,461.0 197.0,454.0 215.0,454.0 226.0,450.0 232.0,454.0 240.0,455.0 250.0,450.0 258.0,443.0 262.0,436.0 266.0,428.0 270.0,424.0 275.0,422.0 285.0,420.0 295.0,420.0 305.0,419.0 315.0,418.4 325.0,418.0 335.0,419.0 343.0,422.0 347.0,427.0 352.0,432.0 358.0,435.6 370.0,436.0 373.0,438.0 380.0,439.6 390.0,440.4 400.0,439.6 408.0,437.0 415.0,433.0 425.0,430.0 435.0,428.4 445.0,426.4 462.0,426.4 468.0,429.0 475.0,432.0 485.0,436.4 495.0,435.6 505.0,434.0 510.0,432.4 520.0,434.0 526.0,435.6 532.0,432.0 538.0,426.0 543.0,421.0 548.0,421.0 552.0,423.0 557.0,429.0 561.0,433.6 567.0,436.4 575.0,440.0 585.0,444.4 592.0,447.6 600.0,449.6 608.0,448.4 615.0,446.4 622.0,447.0 628.0,448.4 635.0,451.0 640.0,455.0 648.0,462.0 656.0,468.4 664.0,469.0 671.0,471.6 676.0,470.0 684.0,468.4 692.0,468.4 700.0,470.0 710.0,472.4 718.0,476.0 728.0,481.0 740.0,481.6 750.0,483.6 756.0,483.6 765.0,481.0 773.0,479.6 788.0,479.6 790.0,480.4 810.0,480.4 816.0,482.4 824.0,486.0 832.0,492.0 838.0,493.6 846.0,492.2 853.0,490.4 865.0,490.4 872.0,492.4 880.0,494.4 888.0,497.4 905.0,497.4 912.0,493.0 917.0,489.0 921.0,484.4 933.0,484.4 935.0,485.4 940.0,485.4 950.0,483.6 965.0,483.6 972.0,485.4 977.0,487.4 987.0,487.4 992.0,486.0 1000.0,485.4 1006.0,483.0 1012.0,479.0 1018.0,475.0 1024.0,471.6 1030.0,469.0 1034.0,468.4 1038.0,469.0 1041.0,470.4" fill="none" stroke="#ff00ff" stroke-width="1" />
<polyline points="4.0,447.0 12.0,455.0 20.0,460.0 28.0,468.0 36.0,470.0 44.0,473.5 52.0,479.0 60.0,483.0 68.0,487.0 76.0,489.0 84.0,495.0 92.0,504.0 100.0,511.0 108.0,508.5 116.0,505.5 124.0,505.5 132.0,509.0 140.0,510.5 148.0,504.0 156.0,502.0 164.0,506.0 172.0,512.0 181.0,524.0 190.0,516.0 198.0,509.5 205.0,514.0 213.0,525.0 221.0,529.0 226.0,529.6 230.0,530.0 233.0,534.0 238.0,538.0 243.0,535.0 250.0,528.0 255.0,518.0 260.0,500.0 264.0,480.0 266.2,466.0 268.0,450.0 269.5,440.0 272.0,439.0 274.0,436.5 277.0,432.0 280.0,429.5 284.0,428.3 287.5,429.0 290.0,430.5 293.0,430.0 297.0,430.0 299.0,428.0 301.0,427.5 304.0,429.0 307.0,430.5 309.0,431.5 312.0,428.5 315.0,424.0 318.0,421.0 322.0,419.5 325.0,418.3 328.0,420.5 331.0,423.5 334.0,427.0 337.0,430.0 340.0,432.5 342.0,435.0 343.5,440.0 345.0,447.0 346.5,455.0 349.0,466.0 352.0,472.0 358.0,482.0 362.0,484.4 367.0,483.6 372.0,486.0 377.0,491.0 382.0,495.0 388.0,498.0 395.0,498.0 402.0,494.0 407.0,489.0 412.0,479.0 417.0,469.0 422.0,460.0 428.0,456.4 434.0,455.0 440.0,453.0 448.0,451.6 456.0,450.4 462.0,450.0 466.0,458.0 470.0,466.0 476.0,472.4 482.0,480.0 486.0,484.4 492.0,480.4 498.0,478.0 503.0,476.4 508.0,471.0 511.0,468.4 516.0,471.0 521.0,475.0 526.0,478.4 530.0,470.0 534.0,460.0 538.0,447.0 541.0,438.0 545.0,431.6 549.0,435.0 552.0,438.0 555.0,450.0 559.0,466.0 563.0,472.0 568.0,478.0 574.0,486.0 580.0,496.0 586.0,503.0 592.0,509.0 600.0,514.4 607.0,513.6 612.0,509.0 616.0,506.4 622.0,508.4 628.0,511.0 632.0,513.0 636.0,520.0 640.0,528.0 643.0,535.0 648.0,550.0 654.0,566.0 660.0,580.0 666.0,592.0 672.0,602.0 678.0,599.0 684.0,596.0 688.0,594.4 694.0,598.0 700.0,603.0 706.0,606.0 712.0,608.0 718.0,614.0 724.0,620.0 730.0,624.0 740.0,622.0 750.0,623.0 754.0,624.0 760.0,618.0 766.0,612.0 772.0,609.0 778.0,607.6 786.0,607.6 792.0,610.0 808.0,610.4 814.0,615.0 820.0,619.0 826.0,623.0 832.0,624.4 838.0,624.0 842.0,622.0 846.0,617.0 852.0,611.0 858.0,609.4 865.0,609.4 870.0,612.0 876.0,616.0 882.0,620.0 888.0,624.0 895.0,624.0 900.0,623.0 906.0,624.4 910.0,619.0 914.0,611.0 917.0,603.0 920.0,594.0 922.0,590.4 930.0,590.4 934.0,592.0 937.0,593.6 942.0,591.6 950.0,589.0 956.0,588.4 964.0,590.0 970.0,593.0 976.0,596.4 985.0,599.4 990.0,598.0 996.0,595.0 1002.0,593.0 1006.0,589.0 1010.0,584.0 1014.0,576.0 1018.0,567.0 1022.0,556.0 1026.0,544.0 1029.0,533.0 1032.0,523.0 1033.0,520.4 1040.0,520.4 1041.0,521.4" fill="none" stroke="#ffff00" stroke-width="1" />
<polyline points="4.0,553.0 10.0,573.0 16.0,593.0 22.0,606.0 28.0,617.0 34.0,620.6 42.0,624.4 50.0,626.0 101.0,626.0 108.0,610.0 116.0,595.6 124.0,589.6 132.0,605.0 140.0,606.4 144.0,590.0 148.0,572.0 152.0,565.0 156.0,558.4 160.0,562.0 164.0,565.0 172.0,566.4 176.0,578.0 181.0,606.0 183.0,590.0 185.0,560.0 186.0,540.0 188.0,510.0 190.0,490.0 193.0,465.0 197.0,444.5 201.0,448.0 205.0,453.0 213.0,459.0 221.0,451.0 226.0,445.0 229.0,442.0 233.0,456.0 237.0,471.0 241.0,460.0 246.0,444.0 250.0,430.0 254.0,424.0 258.0,421.0 263.0,418.4 268.0,417.0 272.0,419.0 277.0,424.0 283.0,423.6 289.0,424.4 293.0,429.0 297.0,427.0 303.0,427.0 310.0,429.0 316.0,424.0 320.0,420.4 324.0,418.4 330.0,421.0 334.0,425.0 338.0,432.0 342.0,440.0 345.0,452.0 349.0,470.0 353.0,488.0 357.0,505.0 362.0,510.0 367.0,513.0 370.0,526.0 372.0,540.0 376.0,565.0 380.0,590.0 383.0,602.0 387.0,610.0 391.0,617.6 398.0,616.4 403.0,608.0 407.0,598.0 411.0,580.0 415.0,560.0 419.0,540.0 421.0,528.0 424.0,520.0 430.0,515.0 436.0,513.0 440.0,502.0 446.0,488.0 452.0,472.0 457.0,455.0 462.0,440.0 467.0,460.0 472.0,490.0 477.0,516.0 481.0,535.0 485.0,545.0 489.0,550.0 493.0,540.0 497.0,533.0 502.0,528.0 506.0,515.0 511.0,499.0 516.0,516.0 520.0,532.0 523.0,550.0 526.4,570.0 529.0,545.0 531.0,520.0 534.0,480.0 538.0,455.0 543.0,436.0 548.0,448.0 552.0,462.0 555.0,490.0 558.0,517.0 562.0,540.0 566.0,555.0 570.0,570.0 575.0,585.0 579.0,598.0 583.0,611.0 588.0,618.0 593.0,622.0 598.0,624.0 603.0,621.0 608.0,617.0 611.0,610.0 615.0,604.4 620.0,608.0 625.0,612.0 630.0,614.0 636.0,619.0 642.0,623.0 648.0,624.0 655.0,618.0 660.0,614.0 664.0,617.0 668.0,618.0 672.0,617.0 676.0,612.0 680.0,604.0 684.0,598.0 688.0,594.0 692.0,597.0 696.0,602.0 700.0,607.0 704.0,610.0 708.0,612.0 712.0,614.0 716.0,617.0 720.0,620.0 724.0,623.0 730.0,624.4 740.0,622.0 748.0,622.0 752.0,624.0 758.0,600.0 762.0,580.0 766.0,562.0 770.0,552.0 775.0,546.0 780.0,545.0 785.0,547.0 788.0,552.0 793.0,555.4 800.0,555.0 805.0,552.0 809.0,550.0 812.0,565.0 816.0,584.0 820.0,600.0 824.0,612.0 828.0,618.0 832.0,622.0 836.0,616.0 840.0,606.0 844.0,590.0 848.0,570.0 852.0,555.0 855.0,543.0 858.0,539.4 864.0,540.0 866.0,545.0 869.0,555.0 873.0,570.0 877.0,585.0 881.0,598.0 885.0,608.0 890.0,611.0 896.0,612.0 900.0,615.0 905.0,612.0 907.0,605.0 909.0,590.0 911.0,570.0 913.0,548.0 915.0,530.0 916.0,520.0 918.0,490.0 920.0,470.0 921.4,460.0 926.0,462.0 930.0,464.0 934.0,470.0 937.4,476.4 942.0,470.0 948.0,462.0 954.0,455.6 960.0,456.4 964.0,460.0 968.0,466.0 972.0,475.0 976.0,490.0 978.0,496.0 982.0,501.0 985.4,505.0 990.0,496.0 994.0,488.0 998.0,482.0 1002.0,478.0 1004.0,470.0 1006.0,455.0 1008.0,442.0 1010.0,436.0 1014.0,428.0 1018.0,423.0 1022.0,420.4 1026.0,418.4 1033.0,418.4 1036.0,425.0 1039.0,432.0 1041.4,438.4" fill="none" stroke="#00ff00" stroke-width="1" />
<polyline points="4.0,450.5 430.4,450.5 438.4,626.0" fill="none" stroke="#ff0000" stroke-width="3.4" />
<polyline points="4.0,500.5 446.0,500.5 454.4,626.0" fill="none" stroke="#ff00ff" stroke-width="3.4" />
<polyline points="462.0,626.0 470.5,500.5 478.6,626.0" fill="none" stroke="#ff00ff" stroke-width="3.4" />
<polyline points="639.4,626.0 647.4,500.5 655.4,626.0" fill="none" stroke="#ff00ff" stroke-width="3.4" />
<polyline points="4.0,533.5 487.0,533.5 494.4,626.0" fill="none" stroke="#808000" stroke-width="3.4" />
<polyline points="575.4,626.0 584.0,533.5 591.0,533.5 599.0,626.0" fill="none" stroke="#808000" stroke-width="3.4" />
<polyline points="631.0,626.0 639.4,533.5 672.0,533.5 679.4,626.0" fill="none" stroke="#808000" stroke-width="3.4" />
<polyline points="703.6,626.0 711.0,533.5 728.6,533.5 736.0,626.0" fill="none" stroke="#808000" stroke-width="3.4" />
<polyline points="4.0,578.3 407.0,578.3 415.0,626.0" fill="none" stroke="#0000ff" stroke-width="3.4" />
<polyline points="51.9,626.0 60.4,581.5 68.9,626.0" fill="none" stroke="#4cc84c" stroke-width="3" />
<polyline points="599.1,626.0 607.6,581.5 616.1,626.0" fill="none" stroke="#4cc84c" stroke-width="3" />
<polyline points="646.9,626.0 655.4,581.5 663.9,626.0" fill="none" stroke="#4cc84c" stroke-width="3" />
<polyline points="752.1,626.0 760.6,581.5 769.1,626.0" fill="none" stroke="#4cc84c" stroke-width="3" />
<polyline points="832.1,626.0 840.6,581.5 849.1,626.0" fill="none" stroke="#4cc84c" stroke-width="3" />
<polyline points="880.5,626.0 889.0,581.5 897.5,626.0" fill="none" stroke="#4cc84c" stroke-width="3" />
<polyline points="888.0,626.0 897.6,585.0 905.6,626.0" fill="none" stroke="#ff0000" stroke-width="2" />
<polyline points="526.4,626.0 534.6,502.0 543.6,626.0" fill="none" stroke="#008b8b" stroke-width="3.4" />
<rect x="4" y="625" width="1037.5" height="3" fill="#008b8b" />
<rect x="528" y="625" width="14" height="3" fill="#4cc84c" />
<rect x="4" y="521" width="1" height="1" fill="#ffffff" />
<rect x="12" y="521" width="1" height="1" fill="#ffffff" />
<rect x="20" y="521" width="1" height="1" fill="#ffffff" />
<rect x="28" y="521" width="1" height="1" fill="#ffffff" />
<rect x="36" y="521" width="1" height="1" fill="#ffffff" />
<rect x="44" y="521" width="1" height="1" fill="#ffffff" />
<rect x="52" y="521" width="1" height="1" fill="#ffffff" />
<rect x="60" y="521" width="1" height="1" fill="#ffffff" />
<rect x="68" y="521" width="1" height="1" fill="#ffffff" />
<rect x="76" y="521" width="1" height="1" fill="#ffffff" />
<rect x="84" y="521" width="1" height="1" fill="#ffffff" />
<rect x="92" y="521" width="1" height="1" fill="#ffffff" />
<rect x="100" y="521" width="1" height="1" fill="#ffffff" />
<rect x="108" y="521" width="1" height="1" fill="#ffffff" />
<rect x="116" y="521" width="1" height="1" fill="#ffffff" />
<rect x="124" y="521" width="1" height="1" fill="#ffffff" />
<rect x="132" y="521" width="1" height="1" fill="#ffffff" />
<rect x="140" y="521" width="1" height="1" fill="#ffffff" />
<rect x="148" y="521" width="1" height="1" fill="#ffffff" />
<rect x="156" y="521" width="1" height="1" fill="#ffffff" />
<rect x="164" y="521" width="1" height="1" fill="#ffffff" />
<rect x="173" y="521" width="1" height="1" fill="#ffffff" />
<rect x="181" y="521" width="1" height="1" fill="#ffffff" />
<rect x="189" y="521" width="1" height="1" fill="#ffffff" />
<rect x="197" y="521" width="1" height="1" fill="#ffffff" />
<rect x="205" y="521" width="1" height="1" fill="#ffffff" />
<rect x="213" y="521" width="1" height="1" fill="#ffffff" />
<rect x="221" y="521" width="1" height="1" fill="#ffffff" />
<rect x="229" y="521" width="1" height="1" fill="#ffffff" />
<rect x="237" y="521" width="1" height="1" fill="#ffffff" />
<rect x="245" y="521" width="1" height="1" fill="#ffffff" />
<rect x="253" y="521" width="1" height="1" fill="#ffffff" />
<rect x="261" y="521" width="1" height="1" fill="#ffffff" />
<rect x="269" y="521" width="1" height="1" fill="#ffffff" />
<rect x="277" y="521" width="1" height="1" fill="#ffffff" />
<rect x="285" y="521" width="1" height="1" fill="#ffffff" />
<rect x="293" y="521" width="1" height="1" fill="#ffffff" />
<rect x="301" y="521" width="1" height="1" fill="#ffffff" />
<rect x="309" y="521" width="1" height="1" fill="#ffffff" />
<rect x="317" y="521" width="1" height="1" fill="#ffffff" />
<rect x="325" y="521" width="1" height="1" fill="#ffffff" />
<rect x="333" y="521" width="1" height="1" fill="#ffffff" />
<rect x="341" y="521" width="1" height="1" fill="#ffffff" />
<rect x="349" y="521" width="1" height="1" fill="#ffffff" />
<rect x="358" y="521" width="1" height="1" fill="#ffffff" />
<rect x="366" y="521" width="1" height="1" fill="#ffffff" />
<rect x="374" y="521" width="1" height="1" fill="#ffffff" />
<rect x="382" y="521" width="1" height="1" fill="#ffffff" />
<rect x="390" y="521" width="1" height="1" fill="#ffffff" />
<rect x="398" y="521" width="1" height="1" fill="#ffffff" />
<rect x="406" y="521" width="1" height="1" fill="#ffffff" />
<rect x="414" y="521" width="1" height="1" fill="#ffffff" />
<rect x="422" y="521" width="1" height="1" fill="#ffffff" />
<rect x="430" y="521" width="1" height="1" fill="#ffffff" />
<rect x="438" y="521" width="1" height="1" fill="#ffffff" />
<rect x="446" y="521" width="1" height="1" fill="#ffffff" />
<rect x="454" y="521" width="1" height="1" fill="#ffffff" />
<rect x="462" y="521" width="1" height="1" fill="#ffffff" />
<rect x="470" y="521" width="1" height="1" fill="#ffffff" />
<rect x="478" y="521" width="1" height="1" fill="#ffffff" />
<rect x="486" y="521" width="1" height="1" fill="#ffffff" />
<rect x="494" y="521" width="1" height="1" fill="#ffffff" />
<rect x="502" y="521" width="1" height="1" fill="#ffffff" />
<rect x="510" y="521" width="1" height="1" fill="#ffffff" />
<rect x="518" y="521" width="1" height="1" fill="#ffffff" />
<rect x="526" y="521" width="1" height="1" fill="#ffffff" />
<rect x="534" y="521" width="1" height="1" fill="#ffffff" />
<rect x="543" y="521" width="1" height="1" fill="#ffffff" />
<rect x="551" y="521" width="1" height="1" fill="#ffffff" />
<rect x="559" y="521" width="1" height="1" fill="#ffffff" />
<rect x="567" y="521" width="1" height="1" fill="#ffffff" />
<rect x="575" y="521" width="1" height="1" fill="#ffffff" />
<rect x="583" y="521" width="1" height="1" fill="#ffffff" />
<rect x="591" y="521" width="1" height="1" fill="#ffffff" />
<rect x="599" y="521" width="1" height="1" fill="#ffffff" />
<rect x="607" y="521" width="1" height="1" fill="#ffffff" />
<rect x="615" y="521" width="1" height="1" fill="#ffffff" />
<rect x="623" y="521" width="1" height="1" fill="#ffffff" />
<rect x="631" y="521" width="1" height="1" fill="#ffffff" />
<rect x="639" y="521" width="1" height="1" fill="#ffffff" />
<rect x="647" y="521" width="1" height="1" fill="#ffffff" />
<rect x="655" y="521" width="1" height="1" fill="#ffffff" />
<rect x="663" y="521" width="1" height="1" fill="#ffffff" />
<rect x="671" y="521" width="1" height="1" fill="#ffffff" />
<rect x="679" y="521" width="1" height="1" fill="#ffffff" />
<rect x="687" y="521" width="1" height="1" fill="#ffffff" />
<rect x="695" y="521" width="1" height="1" fill="#ffffff" />
<rect x="703" y="521" width="1" height="1" fill="#ffffff" />
<rect x="711" y="521" width="1" height="1" fill="#ffffff" />
<rect x="719" y="521" width="1" height="1" fill="#ffffff" />
<rect x="728" y="521" width="1" height="1" fill="#ffffff" />
<rect x="736" y="521" width="1" height="1" fill="#ffffff" />
<rect x="744" y="521" width="1" height="1" fill="#ffffff" />
<rect x="752" y="521" width="1" height="1" fill="#ffffff" />
<rect x="760" y="521" width="1" height="1" fill="#ffffff" />
<rect x="768" y="521" width="1" height="1" fill="#ffffff" />
<rect x="776" y="521" width="1" height="1" fill="#ffffff" />
<rect x="784" y="521" width="1" height="1" fill="#ffffff" />
<rect x="792" y="521" width="1" height="1" fill="#ffffff" />
<rect x="800" y="521" width="1" height="1" fill="#ffffff" />
<rect x="808" y="521" width="1" height="1" fill="#ffffff" />
<rect x="816" y="521" width="1" height="1" fill="#ffffff" />
<rect x="824" y="521" width="1" height="1" fill="#ffffff" />
<rect x="832" y="521" width="1" height="1" fill="#ffffff" />
<rect x="840" y="521" width="1" height="1" fill="#ffffff" />
<rect x="848" y="521" width="1" height="1" fill="#ffffff" />
<rect x="856" y="521" width="1" height="1" fill="#ffffff" />
<rect x="864" y="521" width="1" height="1" fill="#ffffff" />
<rect x="872" y="521" width="1" height="1" fill="#ffffff" />
<rect x="880" y="521" width="1" height="1" fill="#ffffff" />
<rect x="888" y="521" width="1" height="1" fill="#ffffff" />
<rect x="896" y="521" width="1" height="1" fill="#ffffff" />
<rect x="904" y="521" width="1" height="1" fill="#ffffff" />
<rect x="913" y="521" width="1" height="1" fill="#ffffff" />
<rect x="921" y="521" width="1" height="1" fill="#ffffff" />
<rect x="929" y="521" width="1" height="1" fill="#ffffff" />
<rect x="937" y="521" width="1" height="1" fill="#ffffff" />
<rect x="945" y="521" width="1" height="1" fill="#ffffff" />
<rect x="953" y="521" width="1" height="1" fill="#ffffff" />
<rect x="961" y="521" width="1" height="1" fill="#ffffff" />
<rect x="969" y="521" width="1" height="1" fill="#ffffff" />
<rect x="977" y="521" width="1" height="1" fill="#ffffff" />
<rect x="985" y="521" width="1" height="1" fill="#ffffff" />
<rect x="993" y="521" width="1" height="1" fill="#ffffff" />
<rect x="1001" y="521" width="1" height="1" fill="#ffffff" />
<rect x="1009" y="521" width="1" height="1" fill="#ffffff" />
<rect x="1017" y="521" width="1" height="1" fill="#ffffff" />
<rect x="1025" y="521" width="1" height="1" fill="#ffffff" />
<rect x="1033" y="521" width="1" height="1" fill="#ffffff" />
<rect x="1041" y="521" width="1" height="1" fill="#ffffff" />
<rect x="42" y="519" width="4" height="4" fill="#ffffff" />
<rect x="90" y="519" width="4" height="4" fill="#ffffff" />
<rect x="138" y="519" width="4" height="4" fill="#ffffff" />
<rect x="179" y="519" width="4" height="4" fill="#ffffff" />
<rect x="227" y="519" width="4" height="4" fill="#ffffff" />
<rect x="275" y="519" width="4" height="4" fill="#ffffff" />
<rect x="323" y="519" width="4" height="4" fill="#ffffff" />
<rect x="364" y="519" width="4" height="4" fill="#ffffff" />
<rect x="412" y="519" width="4" height="4" fill="#ffffff" />
<rect x="460" y="519" width="4" height="4" fill="#ffffff" />
<rect x="508" y="519" width="4" height="4" fill="#ffffff" />
<rect x="549" y="519" width="4" height="4" fill="#ffffff" />
<rect x="597" y="519" width="4" height="4" fill="#ffffff" />
<rect x="645" y="519" width="4" height="4" fill="#ffffff" />
<rect x="693" y="519" width="4" height="4" fill="#ffffff" />
<rect x="734" y="519" width="4" height="4" fill="#ffffff" />
<rect x="782" y="519" width="4" height="4" fill="#ffffff" />
<rect x="830" y="519" width="4" height="4" fill="#ffffff" />
<rect x="878" y="519" width="4" height="4" fill="#ffffff" />
<rect x="919" y="519" width="4" height="4" fill="#ffffff" />
<rect x="967" y="519" width="4" height="4" fill="#ffffff" />
<rect x="1015" y="519" width="4" height="4" fill="#ffffff" />
</g>
<circle cx="57.2" cy="443.6" r="4.6" fill="none" stroke="#e000e0" stroke-width="1"/>
<text x="57.2" y="447.2" fill="#e000e0" font-size="10" text-anchor="middle" font-weight="bold">③</text>
<circle cx="121.5" cy="443.6" r="4.6" fill="none" stroke="#e000e0" stroke-width="1"/>
<text x="121.5" y="447.2" fill="#e000e0" font-size="10" text-anchor="middle" font-weight="bold">③</text>
<circle cx="185.9" cy="443.6" r="4.6" fill="none" stroke="#e000e0" stroke-width="1"/>
<text x="185.9" y="447.2" fill="#e000e0" font-size="10" text-anchor="middle" font-weight="bold">③</text>
<circle cx="250.2" cy="443.6" r="4.6" fill="none" stroke="#e000e0" stroke-width="1"/>
<text x="250.2" y="447.2" fill="#e000e0" font-size="10" text-anchor="middle" font-weight="bold">③</text>
<circle cx="314.5" cy="443.6" r="4.6" fill="none" stroke="#e000e0" stroke-width="1"/>
<text x="314.5" y="447.2" fill="#e000e0" font-size="10" text-anchor="middle" font-weight="bold">③</text>
<circle cx="378.8" cy="443.6" r="4.6" fill="none" stroke="#e000e0" stroke-width="1"/>
<text x="378.8" y="447.2" fill="#e000e0" font-size="10" text-anchor="middle" font-weight="bold">③</text>
<circle cx="57.2" cy="490.0" r="4.6" fill="none" stroke="#00d8d8" stroke-width="1"/>
<text x="57.2" y="493.6" fill="#00d8d8" font-size="10" text-anchor="middle" font-weight="bold">②</text>
<circle cx="121.5" cy="490.0" r="4.6" fill="none" stroke="#00d8d8" stroke-width="1"/>
<text x="121.5" y="493.6" fill="#00d8d8" font-size="10" text-anchor="middle" font-weight="bold">②</text>
<circle cx="185.9" cy="490.0" r="4.6" fill="none" stroke="#00d8d8" stroke-width="1"/>
<text x="185.9" y="493.6" fill="#00d8d8" font-size="10" text-anchor="middle" font-weight="bold">②</text>
<circle cx="250.2" cy="490.0" r="4.6" fill="none" stroke="#00d8d8" stroke-width="1"/>
<text x="250.2" y="493.6" fill="#00d8d8" font-size="10" text-anchor="middle" font-weight="bold">②</text>
<circle cx="314.5" cy="490.0" r="4.6" fill="none" stroke="#00d8d8" stroke-width="1"/>
<text x="314.5" y="493.6" fill="#00d8d8" font-size="10" text-anchor="middle" font-weight="bold">②</text>
<circle cx="378.8" cy="490.0" r="4.6" fill="none" stroke="#00d8d8" stroke-width="1"/>
<text x="378.8" y="493.6" fill="#00d8d8" font-size="10" text-anchor="middle" font-weight="bold">②</text>
<circle cx="443.2" cy="490.0" r="4.6" fill="none" stroke="#00d8d8" stroke-width="1"/>
<text x="443.2" y="493.6" fill="#00d8d8" font-size="10" text-anchor="middle" font-weight="bold">②</text>
<circle cx="652.0" cy="490.0" r="4.6" fill="none" stroke="#00d8d8" stroke-width="1"/>
<text x="652.0" y="493.6" fill="#00d8d8" font-size="10" text-anchor="middle" font-weight="bold">②</text>
<circle cx="57.2" cy="532.8" r="4.6" fill="none" stroke="#b0b0b0" stroke-width="1"/>
<text x="57.2" y="536.4" fill="#b0b0b0" font-size="10" text-anchor="middle" font-weight="bold">①</text>
<circle cx="121.5" cy="532.8" r="4.6" fill="none" stroke="#b0b0b0" stroke-width="1"/>
<text x="121.5" y="536.4" fill="#b0b0b0" font-size="10" text-anchor="middle" font-weight="bold">①</text>
<circle cx="185.9" cy="532.8" r="4.6" fill="none" stroke="#b0b0b0" stroke-width="1"/>
<text x="185.9" y="536.4" fill="#b0b0b0" font-size="10" text-anchor="middle" font-weight="bold">①</text>
<circle cx="250.2" cy="532.8" r="4.6" fill="none" stroke="#b0b0b0" stroke-width="1"/>
<text x="250.2" y="536.4" fill="#b0b0b0" font-size="10" text-anchor="middle" font-weight="bold">①</text>
<circle cx="314.5" cy="532.8" r="4.6" fill="none" stroke="#b0b0b0" stroke-width="1"/>
<text x="314.5" y="536.4" fill="#b0b0b0" font-size="10" text-anchor="middle" font-weight="bold">①</text>
<circle cx="378.8" cy="532.8" r="4.6" fill="none" stroke="#b0b0b0" stroke-width="1"/>
<text x="378.8" y="536.4" fill="#b0b0b0" font-size="10" text-anchor="middle" font-weight="bold">①</text>
<circle cx="443.2" cy="532.8" r="4.6" fill="none" stroke="#b0b0b0" stroke-width="1"/>
<text x="443.2" y="536.4" fill="#b0b0b0" font-size="10" text-anchor="middle" font-weight="bold">①</text>
<circle cx="588.0" cy="532.8" r="4.6" fill="none" stroke="#b0b0b0" stroke-width="1"/>
<text x="588.0" y="536.4" fill="#b0b0b0" font-size="10" text-anchor="middle" font-weight="bold">①</text>
<circle cx="652.0" cy="532.8" r="4.6" fill="none" stroke="#b0b0b0" stroke-width="1"/>
<text x="652.0" y="536.4" fill="#b0b0b0" font-size="10" text-anchor="middle" font-weight="bold">①</text>
<circle cx="716.0" cy="532.8" r="4.6" fill="none" stroke="#b0b0b0" stroke-width="1"/>
<text x="716.0" y="536.4" fill="#b0b0b0" font-size="10" text-anchor="middle" font-weight="bold">①</text>
<circle cx="57.2" cy="573.0" r="4.6" fill="none" stroke="#00d8d8" stroke-width="1"/>
<text x="57.2" y="576.6" fill="#00d8d8" font-size="10" text-anchor="middle" font-weight="bold">④</text>
<circle cx="121.5" cy="573.0" r="4.6" fill="none" stroke="#00d8d8" stroke-width="1"/>
<text x="121.5" y="576.6" fill="#00d8d8" font-size="10" text-anchor="middle" font-weight="bold">④</text>
<circle cx="185.9" cy="573.0" r="4.6" fill="none" stroke="#00d8d8" stroke-width="1"/>
<text x="185.9" y="576.6" fill="#00d8d8" font-size="10" text-anchor="middle" font-weight="bold">④</text>
<circle cx="250.2" cy="573.0" r="4.6" fill="none" stroke="#00d8d8" stroke-width="1"/>
<text x="250.2" y="576.6" fill="#00d8d8" font-size="10" text-anchor="middle" font-weight="bold">④</text>
<circle cx="314.5" cy="573.0" r="4.6" fill="none" stroke="#00d8d8" stroke-width="1"/>
<text x="314.5" y="576.6" fill="#00d8d8" font-size="10" text-anchor="middle" font-weight="bold">④</text>
<circle cx="378.8" cy="573.0" r="4.6" fill="none" stroke="#00d8d8" stroke-width="1"/>
<text x="378.8" y="576.6" fill="#00d8d8" font-size="10" text-anchor="middle" font-weight="bold">④</text>
<g class="ce">
<rect x="0" y="19" width="1122" height="1" fill="#c80000" />
<rect x="0" y="0" width="1" height="19" fill="#c80000" />
<rect x="23" y="0" width="1" height="19" fill="#c80000" />
<rect x="805" y="0" width="1" height="19" fill="#c80000" />
<rect x="840" y="0" width="1" height="19" fill="#c80000" />
<rect x="875" y="0" width="1" height="19" fill="#c80000" />
<rect x="909" y="0" width="1" height="19" fill="#c80000" />
<rect x="944" y="0" width="1" height="19" fill="#c80000" />
<rect x="979" y="0" width="1" height="19" fill="#c80000" />
<rect x="1014" y="0" width="1" height="19" fill="#c80000" />
<rect x="1049" y="0" width="1" height="19" fill="#c80000" />
<rect x="1084" y="0" width="1" height="19" fill="#c80000" />
<rect x="1121" y="0" width="1" height="600" fill="#c80000" />
<rect x="1070" y="20" width="1" height="627" fill="#c80000" />
<rect x="0" y="396" width="1122" height="1" fill="#c80000" />
<rect x="1070" y="396" width="52" height="2" fill="#c80000" />
<rect x="1070" y="396" width="2" height="251" fill="#c80000" />
<rect x="1120" y="396" width="2" height="204" fill="#c80000" />
<rect x="0" y="630" width="1071" height="1" fill="#c80000" />
<rect x="0" y="630" width="1" height="20" fill="#c80000" />
<rect x="0" y="646" width="972" height="1" fill="#c80000" />
<rect x="1122" y="25" width="8" height="1" fill="#c80000" />
<rect x="1122" y="45" width="8" height="1" fill="#c80000" />
<rect x="1122" y="141" width="8" height="1" fill="#c80000" />
<rect x="1122" y="238" width="8" height="1" fill="#c80000" />
<rect x="1122" y="334" width="8" height="1" fill="#c80000" />
<rect x="1122" y="418" width="8" height="1" fill="#c80000" />
<rect x="1122" y="437" width="8" height="1" fill="#c80000" />
<rect x="1071" y="52" width="5" height="1" fill="#c80000" />
<rect x="1071" y="66" width="2" height="1" fill="#c80000" />
<rect x="1071" y="80" width="5" height="1" fill="#c80000" />
<rect x="1071" y="94" width="2" height="1" fill="#c80000" />
<rect x="1071" y="108" width="5" height="1" fill="#c80000" />
<rect x="1071" y="122" width="2" height="1" fill="#c80000" />
<rect x="1071" y="136" width="5" height="1" fill="#c80000" />
<rect x="1071" y="150" width="2" height="1" fill="#c80000" />
<rect x="1071" y="164" width="5" height="1" fill="#c80000" />
<rect x="1071" y="178" width="2" height="1" fill="#c80000" />
<rect x="1071" y="192" width="5" height="1" fill="#c80000" />
<rect x="1071" y="206" width="2" height="1" fill="#c80000" />
<rect x="1071" y="220" width="5" height="1" fill="#c80000" />
<rect x="1071" y="234" width="2" height="1" fill="#c80000" />
<rect x="1071" y="248" width="5" height="1" fill="#c80000" />
<rect x="1071" y="261" width="2" height="1" fill="#c80000" />
<rect x="1071" y="275" width="5" height="1" fill="#c80000" />
<rect x="1071" y="289" width="2" height="1" fill="#c80000" />
<rect x="1071" y="303" width="5" height="1" fill="#c80000" />
<rect x="1071" y="317" width="2" height="1" fill="#c80000" />
<rect x="1071" y="331" width="5" height="1" fill="#c80000" />
<rect x="1071" y="345" width="2" height="1" fill="#c80000" />
<rect x="1071" y="359" width="5" height="1" fill="#c80000" />
<rect x="1071" y="38" width="2" height="1" fill="#c80000" />
<rect x="1071" y="416" width="5" height="1" fill="#c80000" />
<rect x="1071" y="437" width="2" height="1" fill="#c80000" />
<rect x="1071" y="458" width="5" height="1" fill="#c80000" />
<rect x="1071" y="479" width="2" height="1" fill="#c80000" />
<rect x="1071" y="500" width="5" height="1" fill="#c80000" />
<rect x="1071" y="521" width="2" height="1" fill="#c80000" />
<rect x="1071" y="542" width="5" height="1" fill="#c80000" />
<rect x="1071" y="563" width="2" height="1" fill="#c80000" />
<rect x="1071" y="584" width="5" height="1" fill="#c80000" />
<rect x="1071" y="605" width="2" height="1" fill="#c80000" />
<rect x="156" y="630" width="1" height="16" fill="#c80000" />
<rect x="324" y="630" width="1" height="16" fill="#c80000" />
<rect x="502" y="630" width="1" height="16" fill="#c80000" />
<rect x="638" y="630" width="1" height="16" fill="#c80000" />
<rect x="799" y="630" width="1" height="16" fill="#c80000" />
<rect x="198" y="630" width="1" height="3" fill="#c80000" />
<rect x="240" y="630" width="1" height="3" fill="#c80000" />
<rect x="283" y="630" width="1" height="3" fill="#c80000" />
<rect x="368" y="630" width="1" height="3" fill="#c80000" />
<rect x="413" y="630" width="1" height="3" fill="#c80000" />
<rect x="457" y="630" width="1" height="3" fill="#c80000" />
<rect x="535" y="630" width="1" height="3" fill="#c80000" />
<rect x="570" y="630" width="1" height="3" fill="#c80000" />
<rect x="604" y="630" width="1" height="3" fill="#c80000" />
<rect x="678" y="630" width="1" height="3" fill="#c80000" />
<rect x="719" y="630" width="1" height="3" fill="#c80000" />
<rect x="759" y="630" width="1" height="3" fill="#c80000" />
<rect x="845" y="630" width="1" height="3" fill="#c80000" />
<rect x="892" y="630" width="1" height="3" fill="#c80000" />
<rect x="938" y="630" width="1" height="3" fill="#c80000" />
<rect x="42" y="647" width="1" height="3" fill="#c80000" />
<rect x="74" y="647" width="1" height="3" fill="#c80000" />
<rect x="116" y="647" width="1" height="3" fill="#c80000" />
<rect x="144" y="647" width="1" height="3" fill="#c80000" />
<rect x="178" y="647" width="1" height="3" fill="#c80000" />
<rect x="207" y="647" width="1" height="3" fill="#c80000" />
<rect x="241" y="647" width="1" height="3" fill="#c80000" />
<rect x="283" y="647" width="1" height="3" fill="#c80000" />
<rect x="308" y="647" width="1" height="3" fill="#c80000" />
<rect x="332" y="647" width="1" height="3" fill="#c80000" />
<rect x="364" y="647" width="1" height="3" fill="#c80000" />
<rect x="390" y="647" width="1" height="3" fill="#c80000" />
<rect x="423" y="647" width="1" height="3" fill="#c80000" />
<rect x="480" y="647" width="1" height="3" fill="#c80000" />
<rect x="537" y="647" width="1" height="3" fill="#c80000" />
<rect x="568" y="647" width="1" height="3" fill="#c80000" />
<rect x="599" y="647" width="1" height="3" fill="#c80000" />
<rect x="628" y="647" width="1" height="3" fill="#c80000" />
<rect x="663" y="647" width="1" height="3" fill="#c80000" />
<rect x="697" y="647" width="1" height="3" fill="#c80000" />
<rect x="735" y="647" width="1" height="3" fill="#c80000" />
<rect x="767" y="647" width="1" height="3" fill="#c80000" />
<rect x="807" y="647" width="1" height="3" fill="#c80000" />
<rect x="839" y="647" width="1" height="3" fill="#c80000" />
<rect x="871" y="647" width="1" height="3" fill="#c80000" />
<rect x="1071" y="507" width="50" height="1" fill="#c80000" />
<rect x="1071" y="508" width="50" height="15" fill="#000080" />
</g>
<rect x="5.5" y="4.0" width="11" height="10" rx="2.5" ry="2.5" fill="none" stroke="#808080" stroke-width="1.2"/>
<rect x="12" y="6.0" width="3" height="6" fill="#909090" />
<rect x="1055.5" y="25.0" width="11" height="10" rx="2.5" ry="2.5" fill="none" stroke="#808080" stroke-width="1.2"/>
<rect x="1062" y="27.0" width="3" height="6" fill="#909090" />
<polygon points="1042.5,24 1048,29.5 1042.5,35 1037,29.5" fill="none" stroke="#707070" stroke-width="1"/>
<circle cx="122" cy="28.8" r="6" fill="#7a7a7a"/>
<polyline points="118.8,27.5 122,30.7 125.2,27.5" fill="none" stroke="#000" stroke-width="1.4"/>
<circle cx="8" cy="405" r="6" fill="#7a7a7a"/>
<polyline points="4.8,403.7 8,406.9 11.2,403.7" fill="none" stroke="#000" stroke-width="1.4"/>
<text x="28" y="14" fill="#c8c8c8" font-size="12" text-anchor="start" >分时</text>
<text x="61.5" y="14" fill="#c8c8c8" font-size="12" text-anchor="start" >1分钟</text>
<text x="100.3" y="14" fill="#c8c8c8" font-size="12" text-anchor="start" >5分钟</text>
<text x="139.8" y="14" fill="#c8c8c8" font-size="12" text-anchor="start" >15分钟</text>
<text x="185.6" y="14" fill="#c8c8c8" font-size="12" text-anchor="start" >30分钟</text>
<text x="231.3" y="14" fill="#c8c8c8" font-size="12" text-anchor="start" >60分钟</text>
<text x="278" y="14" fill="#54ffff" font-size="12" text-anchor="start" >日线</text>
<text x="312.3" y="14" fill="#c8c8c8" font-size="12" text-anchor="start" >周线</text>
<text x="346.3" y="14" fill="#c8c8c8" font-size="12" text-anchor="start" >月线</text>
<text x="378.3" y="14" fill="#c8c8c8" font-size="12" text-anchor="start" >多周期</text>
<text x="423.3" y="14" fill="#c8c8c8" font-size="12" text-anchor="start" >更多</text>
<text x="449.5" y="14" fill="#c8c8c8" font-size="12" text-anchor="start" >&gt;</text>
<text x="823.0" y="14" fill="#c8c8c8" font-size="12" text-anchor="middle" >复权</text>
<text x="858.0" y="14" fill="#c8c8c8" font-size="12" text-anchor="middle" >叠加</text>
<text x="893.0" y="14" fill="#c8c8c8" font-size="12" text-anchor="middle" >多股</text>
<text x="927.0" y="14" fill="#c8c8c8" font-size="12" text-anchor="middle" >统计</text>
<text x="962.0" y="14" fill="#c8c8c8" font-size="12" text-anchor="middle" >画线</text>
<text x="997.0" y="14" fill="#c8c8c8" font-size="12" text-anchor="middle" >F10</text>
<text x="1032.0" y="14" fill="#c8c8c8" font-size="12" text-anchor="middle" >标记</text>
<text x="1067.0" y="14" fill="#c8c8c8" font-size="12" text-anchor="middle" >+自选</text>
<text x="1103.0" y="14" fill="#c8c8c8" font-size="12" text-anchor="middle" >返回</text>
<text x="2.5" y="33" fill="#c8c8c8" font-size="12" text-anchor="start" >若羽臣(日线.前复权)</text>
<text x="132.2" y="33" fill="#ffffff" font-size="12" text-anchor="start" >MA5: 38.67</text>
<text x="197.4" y="33" fill="#ffff00" font-size="12" text-anchor="start" >MA10: 37.21</text>
<text x="269.2" y="33" fill="#ff00ff" font-size="12" text-anchor="start" >MA20: 36.43</text>
<text x="341" y="33" fill="#00ff00" font-size="12" text-anchor="start" >MA60: 35.87</text>
<text x="412.6" y="33" fill="#ff0000" font-size="12" text-anchor="start" >金线王2: 39.40</text>
<text x="498.5" y="33" fill="#ff00ff" font-size="12" text-anchor="start" >MA1: 38.67</text>
<text y="53" fill="#ff0000" font-size="12.5" font-weight="bold" x="32.7 47.5 62.3 77 91.5 97.2 112 126.8 141.6">黑马启动,黑马启动</text>
<text y="52" fill="#ff0000" font-size="9.5" x="23.6 159.2">◆◆</text>
<text x="188.5" y="273.5" fill="#ffff00" font-size="9" text-anchor="start" >↖</text>
<text x="197.5" y="275.5" fill="#ffff00" font-size="12" text-anchor="start" >一穿五</text>
<text x="679.5" y="224" fill="#ff0000" font-size="9" text-anchor="start" >↖</text>
<text x="688.5" y="226" fill="#ff0000" font-size="12" text-anchor="start" >金K线</text>
<text x="964" y="362" fill="#ff0000" font-size="12" text-anchor="start" >机构持有56%</text>
<text x="964" y="382" fill="#00ff00" font-size="12" text-anchor="start" >散户持有44%</text>
<text x="534" y="505.5" fill="#ffff00" font-size="12" text-anchor="start" >强势追涨</text>
<text x="1085.5" y="56.8" fill="#ff3c3c" font-size="12" text-anchor="start" >48.00</text>
<text x="1085.5" y="84.8" fill="#ff3c3c" font-size="12" text-anchor="start" >46.00</text>
<text x="1085.5" y="112.8" fill="#ff3c3c" font-size="12" text-anchor="start" >44.00</text>
<text x="1085.5" y="140.8" fill="#ff3c3c" font-size="12" text-anchor="start" >42.00</text>
<text x="1085.5" y="168.8" fill="#ff3c3c" font-size="12" text-anchor="start" >40.00</text>
<text x="1085.5" y="196.8" fill="#ff3c3c" font-size="12" text-anchor="start" >38.00</text>
<text x="1085.5" y="224.8" fill="#ff3c3c" font-size="12" text-anchor="start" >36.00</text>
<text x="1085.5" y="252.8" fill="#ff3c3c" font-size="12" text-anchor="start" >34.00</text>
<text x="1085.5" y="279.8" fill="#ff3c3c" font-size="12" text-anchor="start" >32.00</text>
<text x="1085.5" y="307.8" fill="#ff3c3c" font-size="12" text-anchor="start" >30.00</text>
<text x="1085.5" y="335.8" fill="#ff3c3c" font-size="12" text-anchor="start" >28.00</text>
<text x="1085.5" y="363.8" fill="#ff3c3c" font-size="12" text-anchor="start" >26.00</text>
<text x="1085.5" y="420.8" fill="#ff3c3c" font-size="12" text-anchor="start" >100.0</text>
<text x="1085.5" y="462.8" fill="#ff3c3c" font-size="12" text-anchor="start" >80.00</text>
<text x="1085.5" y="504.8" fill="#ff3c3c" font-size="12" text-anchor="start" >60.00</text>
<text x="1085.5" y="546.8" fill="#ff3c3c" font-size="12" text-anchor="start" >40.00</text>
<text x="1085.5" y="588.8" fill="#ff3c3c" font-size="12" text-anchor="start" >20.00</text>
<text x="1072" y="519" fill="#d8d8d8" font-size="12" text-anchor="start" >49.00</text>
<text x="18.5" y="409.5" fill="#c8c8c8" font-size="12" text-anchor="start" >股朋指标网</text>
<text x="83" y="409.5" fill="#00ff00" font-size="12" text-anchor="start" >短期: 89.18</text>
<text x="150" y="409.5" fill="#ffff00" font-size="12" text-anchor="start" >中期: 50.41</text>
<text x="215" y="409.5" fill="#ff00ff" font-size="12" text-anchor="start" >长期: 74.34</text>
<text x="281.5" y="409.5" fill="#0000ff" font-size="12" text-anchor="start" >: 100.00</text>
<text x="330.5" y="409.5" fill="#ff0000" font-size="12" text-anchor="start" >: 0.00</text>
<text x="365" y="409.5" fill="#0000ff" font-size="12" text-anchor="start" >绝对底<tspan font-size="10.5">④</tspan>: 0.00</text>
<text x="446" y="409.5" fill="#ff0000" font-size="12" text-anchor="start" >大底<tspan font-size="10.5">③</tspan>: 0.00</text>
<text x="516" y="409.5" fill="#ff00ff" font-size="12" text-anchor="start" >中底<tspan font-size="10.5">②</tspan>: 0.00</text>
<text x="584" y="409.5" fill="#808000" font-size="12" text-anchor="start" >短底<tspan font-size="10.5">①</tspan>: 0.00</text>
<text x="654" y="409.5" fill="#c0c0c0" font-size="12" text-anchor="start" >￥<tspan font-size="10.5">①</tspan>: 0.00</text>
<text x="711" y="409.5" fill="#00b000" font-size="12" text-anchor="start" >￥<tspan font-size="10.5">②</tspan>: 0.00</text>
<text x="768" y="409.5" fill="#008080" font-size="12" text-anchor="start" >￥<tspan font-size="10.5">③</tspan>: 0.00</text>
<text x="824.3" y="409.5" fill="#ffffff" font-size="12" text-anchor="start" >强弱分界: 50.00</text>
<text x="914" y="409.5" fill="#ffffff" font-size="12" text-anchor="start" >警戒区: 90.00</text>
<text x="992" y="409.5" fill="#00ffff" font-size="12" text-anchor="start" >安全区: 36.43</text>
<text x="4" y="643.5" fill="#ff3c3c" font-size="12" text-anchor="start" >2025年</text>
<text x="157" y="643.5" fill="#ff3c3c" font-size="12" text-anchor="start" >8</text>
<text x="325.5" y="643.5" fill="#ff3c3c" font-size="12" text-anchor="start" >9</text>
<text x="503" y="643.5" fill="#ff3c3c" font-size="12" text-anchor="start" >10</text>
<text x="640" y="643.5" fill="#ff3c3c" font-size="12" text-anchor="start" >11</text>
<text x="801" y="643.5" fill="#ff3c3c" font-size="12" text-anchor="start" >12</text>
<text x="7" y="659.5" fill="#e0e0e0" font-size="12" text-anchor="start" >指标</text>
<text x="48" y="659.5" fill="#e0e0e0" font-size="12" text-anchor="start" >∧</text>
<text x="823" y="659.5" fill="#e0e0e0" font-size="12" text-anchor="start" >∧</text>
<text x="843" y="659.5" fill="#00e0e0" font-size="12" text-anchor="start" >关联</text>
<clipPath id="rc"><rect x="1122" y="20" width="8" height="580"/></clipPath>
<g clip-path="url(#rc)" font-size="16" fill="#e0e0e0">
<text x="1123.5" y="41.0" fill="#e0e0e0" font-size="16" text-anchor="start" >委比</text>
<text x="1123.5" y="61.0" fill="#e0e0e0" font-size="16" text-anchor="start" >卖五</text>
<text x="1123.5" y="80.3" fill="#e0e0e0" font-size="16" text-anchor="start" >卖四</text>
<text x="1123.5" y="99.6" fill="#e0e0e0" font-size="16" text-anchor="start" >卖三</text>
<text x="1123.5" y="118.9" fill="#e0e0e0" font-size="16" text-anchor="start" >卖二</text>
<text x="1123.5" y="138.2" fill="#e0e0e0" font-size="16" text-anchor="start" >卖一</text>
<text x="1123.5" y="157.5" fill="#e0e0e0" font-size="16" text-anchor="start" >买一</text>
<text x="1123.5" y="176.8" fill="#e0e0e0" font-size="16" text-anchor="start" >买二</text>
<text x="1123.5" y="196.1" fill="#e0e0e0" font-size="16" text-anchor="start" >买三</text>
<text x="1123.5" y="215.4" fill="#e0e0e0" font-size="16" text-anchor="start" >买四</text>
<text x="1123.5" y="234.7" fill="#e0e0e0" font-size="16" text-anchor="start" >买五</text>
<text x="1123.5" y="254.0" fill="#e0e0e0" font-size="16" text-anchor="start" >现价</text>
<text x="1123.5" y="273.3" fill="#e0e0e0" font-size="16" text-anchor="start" >涨跌</text>
<text x="1123.5" y="292.6" fill="#e0e0e0" font-size="16" text-anchor="start" >涨幅</text>
<text x="1123.5" y="311.9" fill="#e0e0e0" font-size="16" text-anchor="start" >总量</text>
<text x="1123.5" y="331.2" fill="#e0e0e0" font-size="16" text-anchor="start" >外盘</text>
<text x="1123.5" y="351.0" fill="#e0e0e0" font-size="16" text-anchor="start" >换手</text>
<text x="1123.5" y="370.3" fill="#e0e0e0" font-size="16" text-anchor="start" >净资</text>
<text x="1123.5" y="389.6" fill="#e0e0e0" font-size="16" text-anchor="start" >收益</text>
<text x="1123.2" y="412" fill="#e0e000" font-size="16" text-anchor="start" >自选</text>
<text x="1123.5" y="433.5" fill="#e0e0e0" font-size="16" text-anchor="start" >交易</text>
<text x="1124" y="452.5" fill="#e8e8e8" font-size="15" text-anchor="start" >14:50</text>
<text x="1124" y="470.5" fill="#e8e8e8" font-size="15" text-anchor="start" >14:51</text>
<text x="1124" y="488.5" fill="#e8e8e8" font-size="15" text-anchor="start" >14:52</text>
<text x="1124" y="506.5" fill="#e8e8e8" font-size="15" text-anchor="start" >14:53</text>
<text x="1124" y="524.5" fill="#e8e8e8" font-size="15" text-anchor="start" >14:54</text>
<text x="1124" y="542.5" fill="#e8e8e8" font-size="15" text-anchor="start" >14:55</text>
<text x="1124" y="560.5" fill="#e8e8e8" font-size="15" text-anchor="start" >14:56</text>
<text x="1124" y="578.5" fill="#e8e8e8" font-size="15" text-anchor="start" >14:57</text>
<text x="1124" y="596.5" fill="#e8e8e8" font-size="15" text-anchor="start" >14:58</text>
</g>
<rect x="971" y="600" width="159" height="50" fill="#3b3737" />
<text x="1050.5" y="622" fill="#ffffff" font-size="18" font-weight="bold" text-anchor="middle">指标公式网</text>
<text x="1053.5" y="640.5" fill="#f4f4ff" font-size="16.2" text-anchor="middle">www.zbgs3.com</text>
</svg></body></html>
